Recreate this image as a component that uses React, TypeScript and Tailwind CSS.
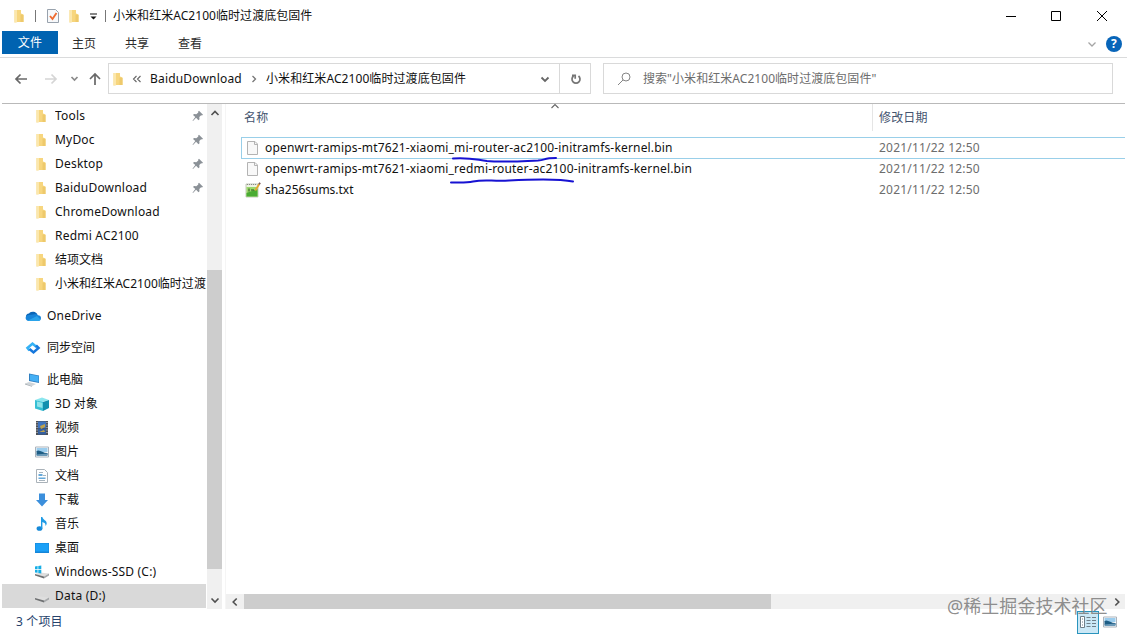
import type { ReactNode } from "react";

const Folder = () => (
  <svg width="16" height="16" viewBox="0 0 16 16">
    <path d="M2.500 2H9v3.500l2.500 1V14H5.500l-3 .5z" fill="#f6d57c" />
    <path d="M2.500 2H5v12.200l-2.500.3z" fill="#fbe7ad" />
    <path d="M5 2h4v8l-4 4z" fill="#f7d67f" />
    <path d="M8.500 6.500l3 .5v7H8.500z" fill="#eec96c" />
  </svg>
);

const Cloud = () => (
  <svg width="17" height="16" viewBox="0 0 17 16">
    <path d="M4 5.500a5 4.600 0 0 1 8.500 1L8 11 1 9.500A3.500 3.500 0 0 1 4 5.500z" fill="#0a66b8" />
    <path d="M8 6.500a4.500 4.500 0 0 1 5 .7 3 3 0 0 1 3 2.800c0 2-1.200 3-3 3H4C-.5 13-.5 7 4 7z" fill="#1784d9" />
    <path d="M3 12.500l9-4.500 3.500 3.500c-.6 1-1.500 1.500-2.500 1.500H4z" fill="#2aa3ea" />
  </svg>
);

const Sync = () => (
  <svg width="16" height="16" viewBox="0 0 16 16" fill="none" strokeWidth="2.600">
    <path d="M4.500 10.500L2.500 8 7.500 3.600l4 3.400" stroke="#35b2f5" />
    <path d="M11 5.500l2.500 2.500-5 4.400-4-3.400" stroke="#1677dc" />
  </svg>
);

const Computer = () => (
  <svg width="16" height="16" viewBox="0 0 16 16">
    <path d="M4 1.500l10 2V11L4 9z" fill="#2f7fc0" />
    <path d="M5 2.500l8.500 1.600v5.800L5 8.200z" fill="#45b0f5" />
    <path d="M0 11.500l4-1.500 7 2-4 2z" fill="#cfd4d8" />
    <path d="M0 11.500l7 2.500v.8L0 12.400z" fill="#a5adb3" />
  </svg>
);

const Cube = () => (
  <svg width="16" height="16" viewBox="0 0 16 16">
    <path d="M1 4l7-2.500L15 4 8 6z" fill="#8be6ee" />
    <path d="M1 4l8 2v9l-8-2.500z" fill="#36bfd4" />
    <path d="M9 6l6-2v8l-6 3z" fill="#128fae" />
    <path d="M3 5.500l5.500 1.200V12L3 10.500z" fill="#8fe3ea" />
  </svg>
);

const Film = () => (
  <svg width="16" height="16" viewBox="0 0 16 16">
    <path d="M2 1h12v14H2z" fill="#4c5057" />
    <path d="M4 1.500h8V8H4z" fill="#3f74bf" />
    <path d="M4 8.500h8v6H4z" fill="#345f9f" />
    <path d="M6 6l5-2v3l-4 2zM5 12l5-2 1 2z" fill="#c0a24b" />
    <path d="M3 2v12M13 2v12" stroke="#d4d8dd" strokeDasharray="1 1.500" />
  </svg>
);

const Picture = () => (
  <svg width="16" height="16" viewBox="0 0 16 16">
    <path d="M1.500 3h13v10h-13z" fill="#fff" stroke="#a9b2bb" />
    <path d="M2.500 4h11v4h-11z" fill="#9bcdee" />
    <path d="M2.500 7c3-2 6 2 11 2v2h-11z" fill="#1d5d85" />
    <path d="M2.500 10.500l11-1V12h-11z" fill="#6a99b8" />
  </svg>
);

const Doc = () => (
  <svg width="16" height="16" viewBox="0 0 16 16">
    <path d="M2.500 1.500h8l3 3v10h-11z" fill="#fff" stroke="#aab2b9" />
    <path d="M5 4.500h4M9 7.500h3M5 12.500h6" stroke="#a9b5be" />
    <path d="M4.500 6h4v2h-4zM4.500 9.500h7v1.500h-7z" fill="#66a9da" />
  </svg>
);

const Download = () => (
  <svg width="16" height="16" viewBox="0 0 16 16">
    <path d="M5 1.500h6V8h3l-6 6.500L2 8h3z" fill="#3b8fdc" />
  </svg>
);

const Music = () => (
  <svg width="16" height="16" viewBox="0 0 16 16">
    <ellipse cx="5.500" cy="12.500" rx="2.900" ry="2.300" fill="#1689d8" />
    <path d="M7 1h1.400c.3 3 4.600 3.200 4.300 6.500-.1 1.300-.7 2-1.300 2.600.8-3-2-3.600-3-4.100v6.500H7z" fill="#1e9be6" />
  </svg>
);

const DesktopIcon = () => (
  <svg width="16" height="16" viewBox="0 0 16 16">
    <path d="M1 3h14v10H1z" fill="#1585d8" />
    <path d="M1.500 3.500h13v8h-13z" fill="#1ba0f7" />
  </svg>
);

const Drive = ({ system = false }: { system?: boolean }) => (
  <svg width="16" height="16" viewBox="0 0 16 16">
    <path d="M1 10l5-1.500 9 1-5 3z" fill="#dedede" />
    <path d="M1 10l9 2.500v2l-9-3z" fill="#6f7173" />
    <path d="M10 12.500l5-3v2l-5 3z" fill="#a6a8aa" />
    {system && (
      <path d="M1 2.500l2.600-.4v3H1zM4.300 2l3-.5v3.600h-3zM1 5.800h2.600v3L1 8.400zM4.300 5.800h3v3.600l-3-.5z" fill="#16aee6" />
    )}
  </svg>
);

const Pin = () => (
  <svg width="12" height="12" viewBox="0 0 12 12">
    <path d="M7 .8l4 4-1 .7-.9-.2-1.800 1.800.2 2.100-1 1L4.100 7.800 1 11l-.5-.2 2.800-3.700L1 4.900l1-.9 2.300.2L6.300 2.600 6.200 1.600z" fill="#8b9197" />
  </svg>
);

const BlankFile = () => (
  <svg width="16" height="16" viewBox="0 0 16 16">
    <path d="M2.500 1.500h7.500l2.500 2.500v10.500h-10z" fill="#f8f8f8" stroke="#b3b3b3" />
    <path d="M9.500 1.500v3h3" fill="none" stroke="#b3b3b3" />
  </svg>
);

const NotepadFile = () => (
  <svg width="16" height="16" viewBox="0 0 16 16">
    <path d="M1 2h12v13H1z" fill="#eef2e4" stroke="#9da892" strokeWidth=".6" />
    <path d="M1.500 5h11v9.500h-11z" fill="#9bd96b" />
    <path d="M1.500 11l11-4v7.500h-11z" fill="#4aab33" />
    <path d="M2 2.500h10" stroke="#888" strokeDasharray="1 1" />
    <path d="M4 6.500v3M6 8h3" stroke="#244c1b" />
    <path d="M9.500 8l4-6.500 1.600 1L11 9z" fill="#e4a52f" />
    <path d="M13.300 1.700l1-1.400 1.500 1-.9 1.400z" fill="#795a5a" />
  </svg>
);

type ChevronProps = { d: string; color?: string; width?: number };

const Chevron = ({ d, color = "#505050", width = 1.6 }: ChevronProps) => (
  <svg width="10" height="10" viewBox="0 0 10 10" fill="none" stroke={color} strokeWidth={width}>
    <path d={d} />
  </svg>
);

const UP = "M1.500 7L5 3.500 8.500 7";
const DOWN = "M1.500 3.500L5 7l3.500-3.500";
const LEFT = "M6.700 1.500L3.200 5l3.500 3.500";
const RIGHT = "M3.300 1.500L6.800 5 3.300 8.500";

const quickAccess = [
  { name: "Tools", pinned: true },
  { name: "MyDoc", pinned: true },
  { name: "Desktop", pinned: true },
  { name: "BaiduDownload", pinned: true },
  { name: "ChromeDownload", pinned: false },
  { name: "Redmi AC2100", pinned: false },
  { name: "结项文档", pinned: false },
  { name: "小米和红米AC2100临时过渡底包固件", pinned: false },
];

const thisPc = [
  { name: "3D 对象", icon: <Cube /> },
  { name: "视频", icon: <Film /> },
  { name: "图片", icon: <Picture /> },
  { name: "文档", icon: <Doc /> },
  { name: "下载", icon: <Download /> },
  { name: "音乐", icon: <Music /> },
  { name: "桌面", icon: <DesktopIcon /> },
  { name: "Windows-SSD (C:)", icon: <Drive system /> },
  { name: "Data (D:)", icon: <Drive />, selected: true },
];

const files = [
  { name: "openwrt-ramips-mt7621-xiaomi_mi-router-ac2100-initramfs-kernel.bin", icon: <BlankFile />, focused: true },
  { name: "openwrt-ramips-mt7621-xiaomi_redmi-router-ac2100-initramfs-kernel.bin", icon: <BlankFile /> },
  { name: "sha256sums.txt", icon: <NotepadFile />, short: true },
];

type TreeRowProps = { icon: ReactNode; name: string; root?: boolean; pinned?: boolean; selected?: boolean };

function TreeRow({ icon, name, root, pinned, selected }: TreeRowProps) {
  const cjk = /[\u4e00-\u9fff]/.test(name);
  return (
    <div
      className={`flex h-6 shrink-0 items-center overflow-hidden ${root ? "pl-[23px]" : "pl-8"} ${selected ? "bg-[#d9d9d9]" : ""}`}
    >
      <span className={`flex shrink-0 ${root ? "w-[22px]" : "w-[21px]"}`}>{icon}</span>
      <span className={`grow overflow-hidden whitespace-nowrap ${cjk ? "tracking-[0.03px]" : "tracking-[0.2px]"}`}>{name}</span>
      {pinned && <span className="mr-[2px] shrink-0"><Pin /></span>}
    </div>
  );
}

function TitleBar() {
  return (
    <div className="flex h-[31px] items-center">
      <div className="ml-3 w-4"><Folder /></div>
      <div className="ml-[7px] h-3 w-px bg-[#777]" />
      <svg className="ml-[10px]" width="14" height="16" viewBox="0 0 14 16" fill="none">
        <path d="M1.500 1.500h8l3 3v10h-11z" fill="#f7f9fb" stroke="#98a2ad" />
        <path d="M4 8l2.500 3 4-6" stroke="#ee6c32" strokeWidth="1.900" />
      </svg>
      <div className="ml-[7px] w-4"><Folder /></div>
      <svg className="ml-[6px] mt-0.5" width="10" height="8" viewBox="0 0 10 8">
        <path d="M1 .500h7v1H1zM1.500 3.500h6L4.500 6.500z" fill="#111" />
      </svg>
      <div className="ml-[6px] h-3 w-px bg-[#777]" />
      <span className="ml-[7px] tracking-[0.05px]">小米和红米AC2100临时过渡底包固件</span>
      <svg className="ml-auto mr-[20px]" width="102" height="12" viewBox="0 0 102 12" fill="none" stroke="#000">
        <path d="M1 6.500h10M46.500 1.500h9v9h-9zM92 1l10 10M102 1l-10 10" />
      </svg>
    </div>
  );
}

function RibbonTabs() {
  return (
    <div className="flex h-[27px] border-b border-[#dadbdc]">
      <div className="ml-0.5 flex h-[23px] w-14 items-center justify-center bg-[#0063b1] pt-px text-white">文件</div>
      <div className="ml-[14px] flex h-[26px] items-center gap-[29px] tracking-normal text-[#2b2b2b]">
        <span>主页</span>
        <span>共享</span>
        <span>查看</span>
      </div>
      <div className="ml-auto mr-[5px] flex h-[26px] items-center gap-[9px]">
        <Chevron d={DOWN} color="#a5a5a5" width={1.3} />
        <div className="flex size-4 items-center justify-center rounded-full bg-[#0865b9] text-[12px] font-bold text-white">?</div>
      </div>
    </div>
  );
}

function AddressBar() {
  return (
    <div className="flex h-[45px] items-center pb-[4px]">
      <svg className="ml-[14px] shrink-0" width="94" height="16" viewBox="0 0 94 16" fill="none" strokeWidth="1.700">
        <path d="M13 8H2M6.500 3.500L2 8l4.500 4.500" stroke="#686868" />
        <path d="M31 8h11M37.500 3.500L42 8l-4.500 4.500" stroke="#d5d5d5" />
        <path d="M57.500 6l3 3 3-3" stroke="#8a8a8a" />
        <path d="M81 14V3M76 8l5-5 5 5" stroke="#686868" />
      </svg>
      <div className="flex h-[31px] w-[483px] items-center border border-[#d9d9d9]">
        <div className="ml-0.5 flex w-4"><Folder /></div>
        <svg className="ml-[5px]" width="10" height="8" viewBox="0 0 10 8" fill="none" stroke="#666" strokeWidth="1.100">
          <path d="M4.500 1L1.500 4l3 3M8.500 1l-3 3 3 3" />
        </svg>
        <span className="ml-2 w-[94px] tracking-[0.18px]">BaiduDownload</span>
        <span className="ml-[5px] flex w-[17px]"><Chevron d="M3.500 2L6.500 5l-3 3" color="#777" width={1.3} /></span>
        <span className="tracking-[0.08px]">小米和红米AC2100临时过渡底包固件</span>
        <div className="ml-auto mr-[9px]"><Chevron d={DOWN} color="#666" width={1.8} /></div>
        <div className="flex h-full w-[31px] items-center justify-center border-l border-[#d9d9d9]">
          <svg className="ml-px" width="14" height="14" viewBox="0 0 14 14" fill="none" stroke="#757575" strokeWidth="1.700">
            <path d="M9.500 4a4 4 0 1 1-5 0M3 3.300h3.200v3.400" />
          </svg>
        </div>
      </div>
      <div className="ml-3 flex h-[31px] w-[510px] items-center border border-[#d9d9d9] tracking-[0.05px] text-[#6d6d6d]">
        <svg className="ml-[13px] mr-3" width="14" height="14" viewBox="0 0 14 14" fill="none" stroke="#858585">
          <circle cx="9" cy="5" r="4" />
          <path d="M6.100 7.900L1 13" />
        </svg>
        搜索"小米和红米AC2100临时过渡底包固件"
      </div>
    </div>
  );
}

function Sidebar() {
  return (
    <div className="flex w-[204px] flex-col">
      {quickAccess.map((item) => (
        <TreeRow key={item.name} icon={<Folder />} name={item.name} pinned={item.pinned} />
      ))}
      <div className="mb-2 mt-2"><TreeRow root icon={<Cloud />} name="OneDrive" /></div>
      <div className="mb-2"><TreeRow root icon={<Sync />} name="同步空间" /></div>
      <TreeRow root icon={<Computer />} name="此电脑" />
      {thisPc.map((item) => (
        <TreeRow key={item.name} {...item} />
      ))}
    </div>
  );
}

function FileList() {
  return (
    <div className="relative flex grow flex-col">
      <div className="flex h-[27px] text-[#44546f]">
        <span className="w-[646px] pl-[18px] pt-[5px]">名称</span>
        <span className="grow border-l border-[#e5e5e5] pl-[6px] pt-[5px]">修改日期</span>
      </div>
      <span className="absolute left-[324px] top-[-3px]"><Chevron d={UP} color="#666" width={1.1} /></span>
      <div className="mt-[6px] pl-[15px]">
        {files.map((file) => (
          <div
            key={file.name}
            className={`flex items-center ${file.focused ? "-mb-px h-[22px] border-y border-l border-[#99cfe9]" : "h-[21px] pl-px"}`}
          >
            <span className="ml-[3px] mr-[4px]">{file.icon}</span>
            <span className={`w-[614px] whitespace-nowrap ${file.short ? "tracking-[-0.03px]" : "tracking-[0.172px]"}`}>{file.name}</span>
            <span className="tracking-[0.2px] text-[#6d6d6d]">2021/11/22 12:50</span>
          </div>
        ))}
      </div>
      {/* pen marks under the router models */}
      <svg className="absolute left-[222px] top-[50px]" width="132" height="32" viewBox="0 0 132 32" fill="none" stroke="#1712d2" strokeWidth="2" strokeLinecap="round">
        <path d="M5 4.500c18-1 22 1 34 2.500 16 1.500 36 0 51-.5 8-.5 5-2.500 18-2.500" />
        <path d="M3 28.500c11 0 15 .5 22-1 12-2.500 19 0 36-1 28-1.500 52-1.500 64 1" />
      </svg>
      <div className="mt-auto flex h-[15px] items-center bg-[#f0f0f0]">
        <span className="ml-[4px] w-[14px]"><Chevron d={LEFT} /></span>
        <div className="h-full w-[527px] bg-[#cdcdcd]" />
        <span className="ml-auto mr-[3px]"><Chevron d={RIGHT} /></span>
      </div>
    </div>
  );
}

export default function App() {
  return (
    <div className="relative flex h-[635px] w-[1127px] flex-col overflow-hidden bg-white font-['Noto_Sans','Noto_Sans_CJK_SC',sans-serif] text-[12px] leading-[18px] tracking-[0.15px] text-[#111]">
      <TitleBar />
      <RibbonTabs />
      <AddressBar />
      <div className="ml-0.5 mr-0.5 flex h-[506px] border-t border-[#b9b9b9]">
        <Sidebar />
        <div className="ml-px flex w-[15px] flex-col items-center justify-between bg-[#f0f0f0] py-[4px]">
          <Chevron d={UP} />
          <div className="mt-[152px] h-[299px] w-full shrink-0 bg-[#cdcdcd]" />
          <span className="mt-auto"><Chevron d={DOWN} /></span>
        </div>
        <div className="w-[4px] border-r border-[#f5f5f5]" />
        <FileList />
      </div>
      <div className="flex grow items-center pl-4 text-[#26426c]">
        <span>3 个项目</span>
        <div className="ml-auto mr-[9px] flex items-center">
          <div className="flex h-[23px] w-[22px] items-center justify-center border border-[#2a94bd] bg-[#cbe8f6]">
            <svg width="18" height="14" viewBox="0 0 18 14" fill="none" stroke="#707f88">
              <path d="M1.500 1.500h4v11h-4z" fill="#fff" />
              <path d="M3 4h1M3 7h1M3 10h1M7.500 2.500h4M13 2.500h4M7.500 5.500h4M13 5.500h4M7.500 8.500h4M13 8.500h4M7.500 11.500h4M13 11.500h4" />
            </svg>
          </div>
          <span className="ml-[3px]"><Picture /></span>
        </div>
      </div>
      <div className="absolute left-[947px] top-[594px] whitespace-nowrap text-[18px] leading-[24px] tracking-[0.05px] text-[#808080]/90">
        @稀土掘金技术社区
      </div>
    </div>
  );
}
